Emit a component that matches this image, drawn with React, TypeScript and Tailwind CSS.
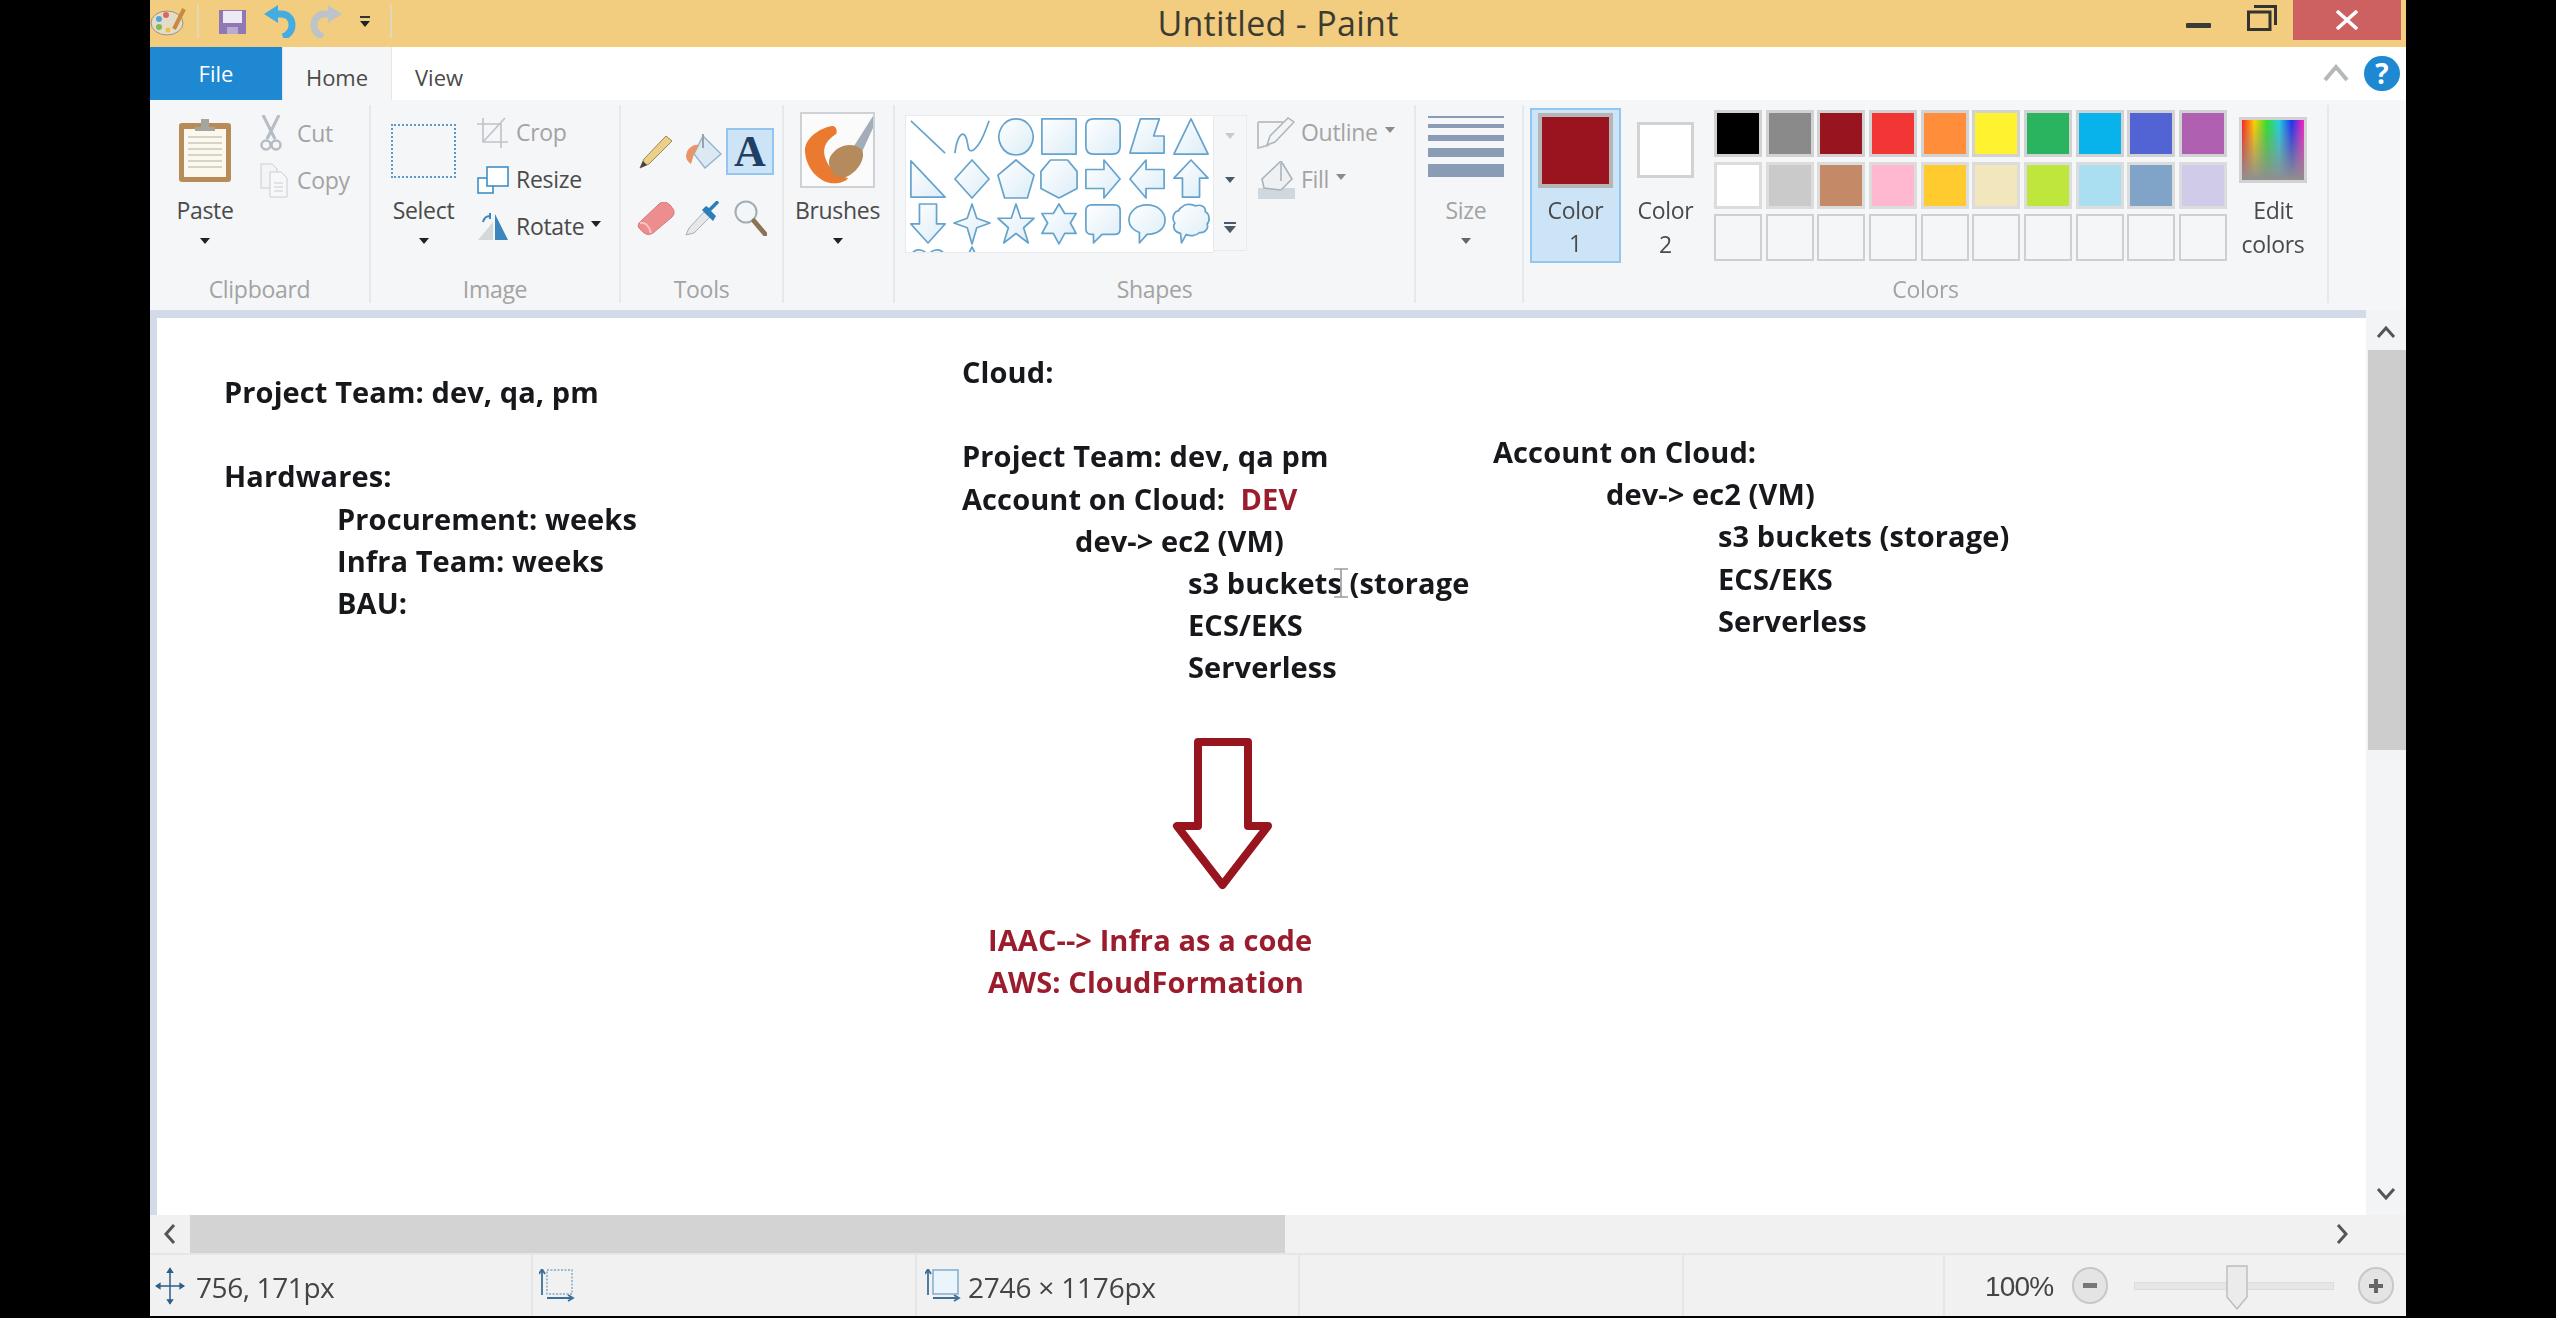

import React from "react";

const ui = "font-['Open_Sans','Noto_Sans',sans-serif]";

function Caret({ c = "#222", w = 10 }: { c?: string; w?: number }) {
  return (
    <svg width={w} height={w * 0.6} viewBox="0 0 10 6">
      <path d="M0 0H10L5 6Z" fill={c} />
    </svg>
  );
}

function Shp({ d, open }: { d: string; open?: boolean }) {
  return (
    <svg width="38" height="38" viewBox="0 0 40 40" className="overflow-visible">
      <defs>
        <linearGradient id="sg" x1="0" y1="0" x2="1" y2="1">
          <stop offset="0" stopColor="#ffffff" />
          <stop offset="1" stopColor="#dcedf7" />
        </linearGradient>
      </defs>
      <path d={d} fill={open ? "none" : "url(#sg)"} stroke="#66a3cc" strokeWidth="1.8" strokeLinejoin="round" />
    </svg>
  );
}

const shapes: { d: string; open?: boolean }[] = [
  { d: "M2 4L38 38", open: true },
  { d: "M2 38C4 22 9 14 13 20C17 27 14 38 21 35C29 30 34 15 38 4", open: true },
  { d: "M20 2A18 19 0 1 0 20.01 2Z" },
  { d: "M2 2H38V39H2Z" },
  { d: "M10 2H30Q38 2 38 10V31Q38 39 30 39H10Q2 39 2 31V10Q2 2 10 2Z" },
  { d: "M2 38L13 2H33L27 20H38V38Z" },
  { d: "M20 2L38 39H2Z" },
  { d: "M2 1L38 39H2Z" },
  { d: "M20 0L38 20L20 40L2 20Z" },
  { d: "M20 0L39 16L32 40H8L1 16Z" },
  { d: "M11 0H29L39 12V30L20 40L1 30V12Z" },
  { d: "M2 10H21V0L38 20L21 40V30H2Z" },
  { d: "M38 10H19V0L2 20L19 40V30H38Z" },
  { d: "M20 0L38 19H29V39H11V19H2Z" },
  { d: "M11 0H29V21H38L20 41L2 21H11Z" },
  { d: "M20 0L25 15L39 20L25 25L20 42L15 25L1 20L15 15Z" },
  { d: "M20 0L25 15H39L28 25L33 41L20 31L7 41L12 25L1 15H15Z" },
  { d: "M20 0L26 10H38L32 20L38 31H26L20 42L14 31H2L8 20L2 10H14Z" },
  { d: "M8 1H32Q38 1 38 7V26Q38 32 32 32H19L10 41V32H8Q2 32 2 26V7Q2 1 8 1Z" },
  { d: "M20 1C31 1 39 8 39 17C39 26 31 32 20 32L12 41L12 30C6 28 1 23 1 17C1 8 9 1 20 1Z" },
  { d: "M12 2C16 -1 22 1 25 2C30 0 36 3 35 8C40 11 40 18 37 21C39 26 34 31 29 30C25 34 19 34 15 32L10 41L9 31C3 30 0 24 3 20C-1 15 2 8 7 7C8 4 10 3 12 2Z" },
  { d: "M20 10C16 0 2 1 2 12C2 24 14 32 20 38C26 32 38 24 38 12C38 1 24 0 20 10Z" },
  { d: "M20 0L28 16L36 38H4L12 16Z" },
];

const row1 = ["bg-[#000000]", "bg-[#8a8a8a]", "bg-[#98141f]", "bg-[#f23535]", "bg-[#ff8d3a]", "bg-[#fff22e]", "bg-[#2bb45f]", "bg-[#08b3eb]", "bg-[#5264d4]", "bg-[#b060b0]"];
const row2 = ["bg-[#ffffff]", "bg-[#cacaca]", "bg-[#c48a68]", "bg-[#ffb8d0]", "bg-[#ffcb2e]", "bg-[#f2e7bc]", "bg-[#bfe63c]", "bg-[#a9dff0]", "bg-[#80a3c8]", "bg-[#d0cbe8]"];

function Group({ className, label, children }: { className: string; label: string; children: React.ReactNode }) {
  return (
    <div className={`flex flex-col justify-between h-[198px] mt-[5px] border-r-2 border-[#e6e8ea] shrink-0 ${className}`}>
      <div className="flex h-[170px]">{children}</div>
      <div className="h-[28px] leading-[28px] text-center text-[23px] tracking-[-0.3px] text-[#a3a3a3]">{label}</div>
    </div>
  );
}

function Large({ w, pt, icon, label, sub, faded }: { w: string; pt: string; icon: React.ReactNode; label: string; sub?: React.ReactNode; faded?: boolean }) {
  return (
    <div className={`flex flex-col items-center shrink-0 ${w}`}>
      <div className={`h-[90px] ${pt}`}>{icon}</div>
      <div className={`h-[30px] leading-[30px] text-[23px] tracking-[-0.3px] whitespace-nowrap ${faded ? "text-[#a3a3a3]" : "text-[#4a4a4a]"}`}>{label}</div>
      <div className={`h-[32px] flex items-center justify-center text-[23px] tracking-[-0.3px] ${faded ? "text-[#a3a3a3]" : "text-[#4a4a4a]"}`}>{sub}</div>
    </div>
  );
}

function Small({ w, icon, label, faded, caret }: { w: string; icon: React.ReactNode; label: string; faded?: boolean; caret?: boolean }) {
  return (
    <div className="flex items-center h-[47px]">
      <div className={`${w} shrink-0`}>{icon}</div>
      <span className={`text-[23px] tracking-[-0.3px] ${faded ? "text-[#a3a3a3]" : "text-[#4a4a4a]"}`}>{label}</span>
      {caret && (
        <span className="ml-[7px] mb-[6px]">
          <Caret c={faded ? "#8b8b8b" : "#222"} w={10} />
        </span>
      )}
    </div>
  );
}

function PaintLogo() {
  return (
    <svg width="37" height="32" viewBox="0 0 37 32">
      <ellipse cx="17" cy="18" rx="16" ry="12" fill="#e4dcc8" stroke="#9c927c" />
      <circle cx="9" cy="14" r="3" fill="#5aa5d8" />
      <circle cx="16" cy="10" r="3" fill="#d86a5a" />
      <circle cx="9" cy="22" r="3" fill="#7dbb5a" />
      <circle cx="18" cy="25" r="2.5" fill="#e8c34a" />
      <path d="M24 24L34 4" stroke="#c98a3e" strokeWidth="4" />
    </svg>
  );
}
function Save() {
  return (
    <svg width="27" height="24" viewBox="0 0 27 24">
      <path d="M0 0H27V24H0Z" fill="#8f78b4" />
      <path d="M4 1H23V13H4Z" fill="#eeeaf4" />
      <path d="M8 17H19V24H8Z" fill="#b9aacf" />
    </svg>
  );
}
function Undo() {
  return (
    <svg width="32" height="33" viewBox="0 0 32 33">
      <path d="M0 9L14 0V18Z" fill="#45ace2" />
      <path d="M10 9H17C25 9 28 15 28 20C28 26 24 30 19 32" fill="none" stroke="#45ace2" strokeWidth="7" />
    </svg>
  );
}
function Redo() {
  return (
    <svg width="32" height="33" viewBox="0 0 32 33">
      <path d="M32 9L18 0V18Z" fill="#bcc4ca" />
      <path d="M22 9H15C7 9 4 15 4 20C4 26 8 30 13 32" fill="none" stroke="#bcc4ca" strokeWidth="7" />
    </svg>
  );
}
function PasteIcon() {
  return (
    <svg width="54" height="66" viewBox="0 0 54 66">
      <rect x="1" y="6" width="52" height="59" rx="3" fill="#b88c58" />
      <rect x="6" y="12" width="42" height="48" fill="#fbf8ef" />
      <path d="M10 20H44M10 26H44M10 32H44M10 38H44M10 44H44M10 50H44" stroke="#d8d3c6" strokeWidth="2" />
      <path d="M17 10H23V2H31V10H37V14H17Z" fill="#a5a5a0" />
    </svg>
  );
}
function Scissors() {
  return (
    <svg width="22" height="37" viewBox="0 0 22 37">
      <path d="M3 0L15 24M19 0L7 24" stroke="#b5bcc4" strokeWidth="3" fill="none" />
      <circle cx="6" cy="30" r="4.5" fill="none" stroke="#b5bcc4" strokeWidth="2.5" />
      <circle cx="16" cy="30" r="4.5" fill="none" stroke="#b5bcc4" strokeWidth="2.5" />
    </svg>
  );
}
function CopyIcon() {
  return (
    <svg width="28" height="35" viewBox="0 0 28 35">
      <path d="M1 1H12L17 6V25H1Z" fill="#f2f4f6" stroke="#c8ced4" />
      <path d="M10 9H21L27 15V34H10Z" fill="#f7f8f9" stroke="#c8ced4" />
      <path d="M14 20H23M14 24H23M14 28H23" stroke="#c8ced4" />
    </svg>
  );
}
function CropIcon() {
  return (
    <svg width="31" height="30" viewBox="0 0 31 30">
      <path d="M0 6H24V30M6 0V24H31" fill="none" stroke="#bdc3c9" strokeWidth="1.6" />
      <path d="M28 0L6 24" stroke="#bdc3c9" strokeWidth="1.6" />
    </svg>
  );
}
function ResizeIcon() {
  return (
    <svg width="32" height="28" viewBox="0 0 32 28">
      <rect x="1" y="12" width="15" height="15" fill="#fff" stroke="#3f8fc8" strokeWidth="1.6" />
      <rect x="10" y="1" width="21" height="19" fill="#fff" stroke="#3f8fc8" strokeWidth="1.6" />
    </svg>
  );
}
function RotateIcon() {
  return (
    <svg width="34" height="27" viewBox="0 0 34 27">
      <path d="M18 1L31 27H18Z" fill="#3d85bd" />
      <path d="M16 9V27H1Z" fill="#d5d8da" />
      <path d="M6 9C7 5 10 3 13 3M13 0V6" stroke="#3d85bd" strokeWidth="2" fill="none" />
    </svg>
  );
}
function Pencil() {
  return (
    <svg width="34" height="34" viewBox="0 0 34 34">
      <path d="M1 33L5 24L27 1L33 6L10 29Z" fill="#ecd08a" stroke="#9a8652" strokeWidth="1" />
      <path d="M1 33L4 26L8 30Z" fill="#444" />
    </svg>
  );
}
function FillIcon() {
  return (
    <svg width="37" height="35" viewBox="0 0 37 35">
      <path d="M18 2L36 20L20 34L9 20Z" fill="#dbe9f3" stroke="#8fb4cf" strokeWidth="1.4" />
      <path d="M18 0V14" stroke="#9aa3ab" strokeWidth="2" />
      <path d="M1 22C2 14 8 10 14 11L9 20L6 30C3 28 1 25 1 22Z" fill="#e8956a" />
    </svg>
  );
}
function Eraser() {
  return (
    <svg width="38" height="33" viewBox="0 0 38 33">
      <path d="M2 21L22 2C25 -1 30 0 33 3L36 7C38 10 37 13 35 15L16 31C13 33 9 33 6 30L2 26C1 25 1 23 2 21Z" fill="#ee8d8f" stroke="#cf7777" />
      <path d="M3 21C8 20 12 24 14 31" stroke="#f8c4c5" strokeWidth="2" fill="none" />
    </svg>
  );
}
function Picker() {
  return (
    <svg width="36" height="36" viewBox="0 0 36 36">
      <path d="M1 35L4 28L19 12L25 17L9 33Z" fill="#e4e8ea" stroke="#a8b0b6" />
      <path d="M17 10L28 21L31 16L26 11L34 3L33 1H31L24 8L21 6Z" fill="#2d7db8" />
    </svg>
  );
}
function Magnifier() {
  return (
    <svg width="33" height="36" viewBox="0 0 33 36">
      <circle cx="12" cy="12" r="10.5" fill="#f2f6f9" stroke="#a4adb5" strokeWidth="2" />
      <path d="M20 21L31 34" stroke="#8b7455" strokeWidth="5" strokeLinecap="round" />
    </svg>
  );
}
function BrushIcon() {
  return (
    <div className="w-[75px] h-[76px] border-2 border-[#cfd2d4] bg-[#fbfbfb]">
      <svg width="71" height="72" viewBox="0 0 71 72">
        <path d="M71 2L52 32L60 38L71 14Z" fill="#a3adb8" />
        <path d="M30 12C18 14 2 24 3 38C4 52 14 66 28 69C36 70 44 68 46 64C36 62 28 56 24 46C20 36 22 28 34 20C36 18 34 11 30 12Z" fill="#ea7a30" />
        <path d="M30 40C38 30 52 28 60 36C64 44 56 58 44 63C36 66 30 60 28 54C26 48 27 44 30 40Z" fill="#b58a5c" />
      </svg>
    </div>
  );
}
function OutlineIcon() {
  return (
    <svg width="38" height="32" viewBox="0 0 38 32">
      <path d="M1 5H26M1 5V31L12 28" fill="none" stroke="#bcc4ca" strokeWidth="2" />
      <path d="M10 28L13 19L31 1L37 5L18 25Z" fill="#f2f4f6" stroke="#aeb6bd" strokeWidth="1.5" />
    </svg>
  );
}
function FillOutlineIcon() {
  return (
    <svg width="38" height="38" viewBox="0 0 38 38">
      <path d="M1 27H38V38H1Z" fill="#cfd8df" />
      <path d="M24 0L35 18L24 29L7 27L5 18Z" fill="#eef1f3" stroke="#aab3ba" strokeWidth="1.6" />
      <path d="M24 2V20" stroke="#aab3ba" strokeWidth="1.6" />
    </svg>
  );
}
function MoveIcon() {
  return (
    <svg width="30" height="38" viewBox="0 0 32 40">
      <path d="M16 1V39M1 20H31" stroke="#2c5f8a" strokeWidth="1.6" />
      <path d="M16 0L12 6H20ZM16 40L12 34H20ZM0 20L6 16V24ZM32 20L26 16V24Z" fill="#2c5f8a" />
    </svg>
  );
}
function SelIcon({ solid }: { solid?: boolean }) {
  return (
    <svg width="36" height="34" viewBox="0 0 36 34">
      <path d="M3 0V26M0 5L3 0L6 5" stroke="#3e6f97" strokeWidth="1.8" fill="none" />
      <path d="M8 29H34M29 26L34 29L29 32" stroke="#3e6f97" strokeWidth="1.8" fill="none" />
      <rect x="8" y="1" width="25" height="24" fill={solid ? "#eaf4fb" : "none"} stroke="#7ba8c8" strokeWidth="1.4" strokeDasharray={solid ? undefined : "2 1.5"} />
    </svg>
  );
}

export default function App() {
  return (
    <div className={`w-[2556px] h-[1318px] bg-black pl-[150px] overflow-hidden ${ui}`}>
      <div className="w-[2256px] h-[1316px] flex flex-col blur-[0.7px] overflow-hidden">
        {/* title bar */}
        <div className="h-[47px] bg-[#f2cd80] grid grid-cols-[1fr_auto_1fr] shrink-0">
          <div className="flex items-start">
            <div className="mt-[5px]"><PaintLogo /></div>
            <div className="ml-[10px] mt-[4px] w-[2px] h-[34px] bg-[#e3d7b4]" />
            <div className="ml-[20px] mt-[10px]"><Save /></div>
            <div className="ml-[18px] mt-[5px]"><Undo /></div>
            <div className="ml-[14px] mt-[5px]"><Redo /></div>
            <div className="ml-[18px] mt-[16px] flex flex-col gap-[3px]">
              <div className="w-[10px] h-[2px] bg-[#333]" />
              <Caret w={10} />
            </div>
            <div className="ml-[20px] mt-[4px] w-[2px] h-[34px] bg-[#e3d7b4]" />
          </div>
          <div className="text-[34px] leading-[47px] tracking-[0.3px] text-[#3d3a31] whitespace-nowrap">Untitled - Paint</div>
          <div className="flex justify-end items-start">
            <div className="mt-[23px] w-[25px] h-[5px] rounded-[1px] bg-[#3a3a36]" />
            <div className="ml-[36px] mt-[5px]">
              <svg width="30" height="26" viewBox="0 0 30 26">
                <path d="M7 1.5H28.5V20" fill="none" stroke="#33332f" strokeWidth="3" />
                <rect x="1.5" y="7" width="21.5" height="17.5" fill="none" stroke="#33332f" strokeWidth="3" />
              </svg>
            </div>
            <div className="ml-[16px] mr-[5px] w-[108px] h-[40px] bg-[#cd6161] flex items-center justify-center">
              <svg width="22" height="20" viewBox="0 0 22 20">
                <path d="M1 1L21 19M21 1L1 19" stroke="#fff" strokeWidth="3.4" />
              </svg>
            </div>
          </div>
        </div>

        {/* tabs */}
        <div className="h-[53px] bg-white flex shrink-0 relative">
          <div className="w-[132px] bg-[#1e88d2] text-white text-[22px] flex items-center justify-center">File</div>
          <div className="w-[110px] bg-[#f5f6f7] text-[#4a4a4a] text-[22px] flex items-center justify-center pt-[8px] border-x border-[#e4e6e8]">Home</div>
          <div className="ml-[23px] text-[#4a4a4a] text-[22px] flex items-center pt-[8px]">View</div>
          <div className="flex-1 flex justify-end items-start">
            <svg width="26" height="18" viewBox="0 0 26 18" className="mt-[17px]">
              <path d="M2 16L13 3L24 16" fill="none" stroke="#b4b8bb" strokeWidth="4" />
            </svg>
            <div className="ml-[15px] mr-[6px] mt-[9px] w-[36px] h-[35px] rounded-full bg-[#1e88d2] text-white text-[28px] font-bold leading-[35px] text-center">?</div>
          </div>
        </div>

        {/* ribbon */}
        <div className="h-[212px] bg-[#f5f6f7] border-t-2 border-[#e8eaec] flex shrink-0 -mt-[2px]">
          <Group className="w-[221px]" label="Clipboard">
            <div className="ml-[28px]">
              <Large w="w-[54px]" pt="pt-[12px]" icon={<PasteIcon />} label="Paste" sub={<Caret />} />
            </div>
            <div className="ml-[28px] pt-[5px] flex flex-col">
              <Small w="w-[37px]" icon={<Scissors />} label="Cut" faded />
              <Small w="w-[37px]" icon={<CopyIcon />} label="Copy" faded />
            </div>
          </Group>
          <Group className="w-[250px]" label="Image">
            <div className="ml-[20px]">
              <Large
                w="w-[65px]"
                pt="pt-[19px]"
                icon={<div className="w-[65px] h-[54px] border-2 border-dotted border-[#5a9ac8]" />}
                label="Select"
                sub={<Caret />}
              />
            </div>
            <div className="ml-[21px] pt-[4px] flex flex-col">
              <Small w="w-[39px]" icon={<CropIcon />} label="Crop" faded />
              <Small w="w-[39px]" icon={<ResizeIcon />} label="Resize" />
              <Small w="w-[39px]" icon={<RotateIcon />} label="Rotate" caret />
            </div>
          </Group>
          <Group className="w-[163px]" label="Tools">
            <div className="ml-[11px] mt-[23px] grid grid-cols-[48px_46px_48px] grid-rows-[47px_40px] gap-y-[23px] justify-items-center items-center h-fit">
              <Pencil />
              <FillIcon />
              <div className="w-[48px] h-[47px] bg-[#cde4f7] border-2 border-[#93c5ee] flex items-center justify-center font-['Liberation_Serif',serif] font-bold text-[44px] text-[#1f3f66]">A</div>
              <Eraser />
              <Picker />
              <Magnifier />
            </div>
          </Group>
          <Group className="w-[111px]" label="">
            <div className="ml-[11px]">
              <Large w="w-[85px]" pt="pt-[7px]" icon={<BrushIcon />} label="Brushes" sub={<Caret />} />
            </div>
          </Group>
          <Group className="w-[521px]" label="Shapes">
            <div className="ml-[10px] mt-[10px] flex h-[138px]">
              <div className="w-[309px] h-[138px] bg-white border border-[#e8eaec] overflow-hidden">
                <div className="-mt-[2px] grid grid-cols-7 auto-rows-[43.5px] justify-items-center items-center">
                  {shapes.map((s, i) => (
                    <Shp key={i} d={s.d} open={s.open} />
                  ))}
                </div>
              </div>
              <div className="w-[33px] h-[136px] border border-l-0 border-[#e8eaec] flex flex-col items-center justify-between py-[17px]">
                <Caret c="#c4cbd2" w={10} />
                <Caret c="#4a5a6a" w={10} />
                <div className="flex flex-col items-center gap-[2px]">
                  <div className="w-[12px] h-[2px] bg-[#4a5a6a]" />
                  <Caret c="#4a5a6a" w={12} />
                </div>
              </div>
            </div>
            <div className="ml-[10px] pt-[4px] flex flex-col">
              <Small w="w-[44px]" icon={<OutlineIcon />} label="Outline" faded caret />
              <Small w="w-[44px]" icon={<FillOutlineIcon />} label="Fill" faded caret />
            </div>
          </Group>
          <Group className="w-[108px]" label="">
            <div className="ml-[12px]">
              <Large
                w="w-[76px]"
                pt="pt-[11px]"
                icon={
                  <div className="w-[76px] flex flex-col items-stretch">
                    <div className="h-[2px] bg-[#8a9bb5]" />
                    <div className="h-[4px] mt-[6px] bg-[#8a9bb5]" />
                    <div className="h-[6px] mt-[7px] bg-[#8a9bb5]" />
                    <div className="h-[9px] mt-[7px] bg-[#8a9bb5]" />
                    <div className="h-[13px] mt-[7px] bg-[#8a9bb5]" />
                  </div>
                }
                label="Size"
                faded
                sub={<Caret c="#666" />}
              />
            </div>
          </Group>
          <Group className="w-[805px]" label="Colors">
            <div className="ml-[6px] mt-[3px] w-[91px] h-[155px] bg-[#cde4f7] border-2 border-[#93c5ee] flex flex-col items-center">
              <div className="mt-[3px] w-[75px] h-[75px] bg-[#99141f] border-[4px] border-[#b5b5b5]" />
              <div className="mt-[7px] h-[30px] leading-[30px] text-[23px] tracking-[-0.3px] text-[#4a4a4a]">Color</div>
              <div className="h-[32px] leading-[36px] text-[23px] text-[#4a4a4a]">1</div>
            </div>
            <div className="ml-[16px]">
              <Large
                w="w-[57px]"
                pt="pt-[17px]"
                icon={<div className="w-[57px] h-[56px] bg-white border-[3px] border-[#d2d2d2]" />}
                label="Color"
                sub={<span className="mt-[6px]">2</span>}
              />
            </div>
            <div className="ml-[20px] mt-[5px] w-[513px] h-fit grid grid-cols-10 gap-x-[3.7px] gap-y-[5px]">
              {row1.map((c) => (
                <div key={c} className={`h-[47px] border-[3px] border-[#d2d2d2] ${c}`} />
              ))}
              {row2.map((c) => (
                <div key={c} className={`h-[47px] border-[3px] border-[#dcdcdc] ${c}`} />
              ))}
              {Array.from({ length: 10 }).map((_, i) => (
                <div key={i} className="h-[47px] border-2 border-[#cfcfcf] bg-[#f5f6f7]" />
              ))}
            </div>
            <div className="ml-[10px]">
              <Large
                w="w-[72px]"
                pt="pt-[12px]"
                icon={
                  <div className="w-[68px] h-[66px] border-[3px] border-[#d2d2d2] bg-[linear-gradient(to_right,#ff2020,#ffd000,#30e030,#20d0e0,#2030f0,#ff20c0)]">
                    <div className="h-full bg-gradient-to-b from-transparent to-[#8f8f8f]" />
                  </div>
                }
                label="Edit"
                sub={<span className="mt-[6px]">colors</span>}
              />
            </div>
          </Group>
          <div className="flex-1" />
        </div>

        {/* canvas area */}
        <div className="h-[905px] flex shrink-0">
          <div className="flex-1 flex flex-col">
            <div className="h-[8px] bg-[#d3dbe8] shrink-0" />
            <div className="flex-1 flex">
              <div className="w-[7px] bg-[#d3dbe8] shrink-0" />
              <div className="flex-1 bg-white relative font-['Open_Sans',sans-serif] font-bold text-[29px] tracking-[0.1px] leading-[42.2px] text-[#16181c] whitespace-pre">
                <div className="absolute left-[67px] top-[53px]">
                  <div>Project Team: dev, qa, pm</div>
                  <div>&nbsp;</div>
                  <div>Hardwares:</div>
                  <div className="pl-[113px]">Procurement: weeks</div>
                  <div className="pl-[113px]">Infra Team: weeks</div>
                  <div className="pl-[113px]">BAU:</div>
                </div>
                <div className="absolute left-[805px] top-[33px]">
                  <div>Cloud:</div>
                  <div>&nbsp;</div>
                  <div>Project Team: dev, qa pm</div>
                  <div>Account on Cloud:  <span className="text-[#9b1c2c]">DEV</span></div>
                  <div className="pl-[113px]">dev-&gt; ec2 (VM)</div>
                  <div className="pl-[226px]">s3 buckets (storage</div>
                  <div className="pl-[226px]">ECS/EKS</div>
                  <div className="pl-[226px]">Serverless</div>
                </div>
                <div className="absolute left-[1336px] top-[113px]">
                  <div>Account on Cloud:</div>
                  <div className="pl-[113px]">dev-&gt; ec2 (VM)</div>
                  <div className="pl-[225px]">s3 buckets (storage)</div>
                  <div className="pl-[225px]">ECS/EKS</div>
                  <div className="pl-[225px]">Serverless</div>
                </div>
                <svg width="101" height="152" viewBox="0 0 101 152" className="absolute left-[1015px] top-[420px]">
                  <path d="M26 4H76V88H96L50.5 147L5 88H26Z" fill="none" stroke="#98141f" strokeWidth="8" strokeLinejoin="round" />
                </svg>
                <svg width="16" height="30" viewBox="0 0 16 30" className="absolute left-[1176px] top-[250px]">
                  <path d="M1 1H15M8 1V29M1 29H15" fill="none" stroke="#9a9a9a" strokeWidth="1.6" />
                </svg>
                <div className="absolute left-[831px] top-[601px] text-[#9b1c2c]">
                  <div>IAAC--&gt; Infra as a code</div>
                  <div>AWS: CloudFormation</div>
                </div>
              </div>
            </div>
          </div>
          <div className="w-[40px] bg-[#f3f4f5] flex flex-col items-center shrink-0">
            <svg width="20" height="14" viewBox="0 0 20 14" className="mt-[15px]">
              <path d="M2 12L10 3L18 12" fill="none" stroke="#555" strokeWidth="3" />
            </svg>
            <div className="mt-[11px] ml-[2px] w-[38px] h-[400px] bg-[#cdcdcd]" />
            <div className="flex-1" />
            <svg width="20" height="14" viewBox="0 0 20 14" className="mb-[14px]">
              <path d="M2 2L10 11L18 2" fill="none" stroke="#555" strokeWidth="3" />
            </svg>
          </div>
        </div>

        {/* horizontal scrollbar */}
        <div className="h-[38px] bg-[#f1f1f1] flex items-center shrink-0">
          <div className="w-[40px] flex justify-center">
            <svg width="14" height="22" viewBox="0 0 14 22">
              <path d="M11 2L3 11L11 20" fill="none" stroke="#555" strokeWidth="3" />
            </svg>
          </div>
          <div className="w-[1095px] h-full bg-[#d3d3d3]" />
          <div className="flex-1 flex justify-end pr-[57px]">
            <svg width="14" height="22" viewBox="0 0 14 22">
              <path d="M3 2L11 11L3 20" fill="none" stroke="#555" strokeWidth="3" />
            </svg>
          </div>
        </div>

        {/* status bar */}
        <div className="h-[63px] bg-[#f1f1f1] border-t-2 border-[#e6e6e6] flex text-[28px] text-[#444] shrink-0">
          <div className="w-[383px] border-r-2 border-[#e6e6e6] flex items-center pl-[5px] gap-[11px]">
            <MoveIcon />
            <span className="tracking-[-0.4px] pt-[3px]">756, 171px</span>
          </div>
          <div className="w-[384px] border-r-2 border-[#e6e6e6] flex items-center pl-[6px]">
            <SelIcon />
          </div>
          <div className="w-[383px] border-r-2 border-[#e6e6e6] flex items-center pl-[8px] gap-[7px]">
            <SelIcon solid />
            <span className="tracking-[-0.2px] pt-[3px]">2746 × 1176px</span>
          </div>
          <div className="w-[384px] border-r-2 border-[#e6e6e6]" />
          <div className="w-[261px] border-r-2 border-[#e6e6e6]" />
          <div className="flex-1 flex items-center pl-[40px]">
            <span className="w-[87px] tracking-[-0.8px] pt-[3px] font-['Liberation_Sans',sans-serif]">100%</span>
            <div className="w-[36px] h-[37px] rounded-full border-2 border-[#c8c8c8] bg-[#e4e4e4] flex items-center justify-center">
              <div className="w-[14px] h-[5px] bg-[#777]" />
            </div>
            <div className="ml-[26px] w-[200px] h-[8px] bg-[#e6e6e6] border border-[#dcdcdc] relative">
              <svg width="22" height="45" viewBox="0 0 22 45" className="absolute left-[91px] -top-[18px]">
                <path d="M1 1H21V32L11 44L1 32Z" fill="#ebebeb" stroke="#bcbcbc" strokeWidth="1.4" />
              </svg>
            </div>
            <div className="ml-[24px] w-[36px] h-[37px] rounded-full border-2 border-[#c8c8c8] bg-[#e4e4e4] flex items-center justify-center">
              <svg width="16" height="16" viewBox="0 0 16 16">
                <path d="M8 1V15M1 8H15" stroke="#666" strokeWidth="4" />
              </svg>
            </div>
          </div>
        </div>
      </div>
    </div>
  );
}
